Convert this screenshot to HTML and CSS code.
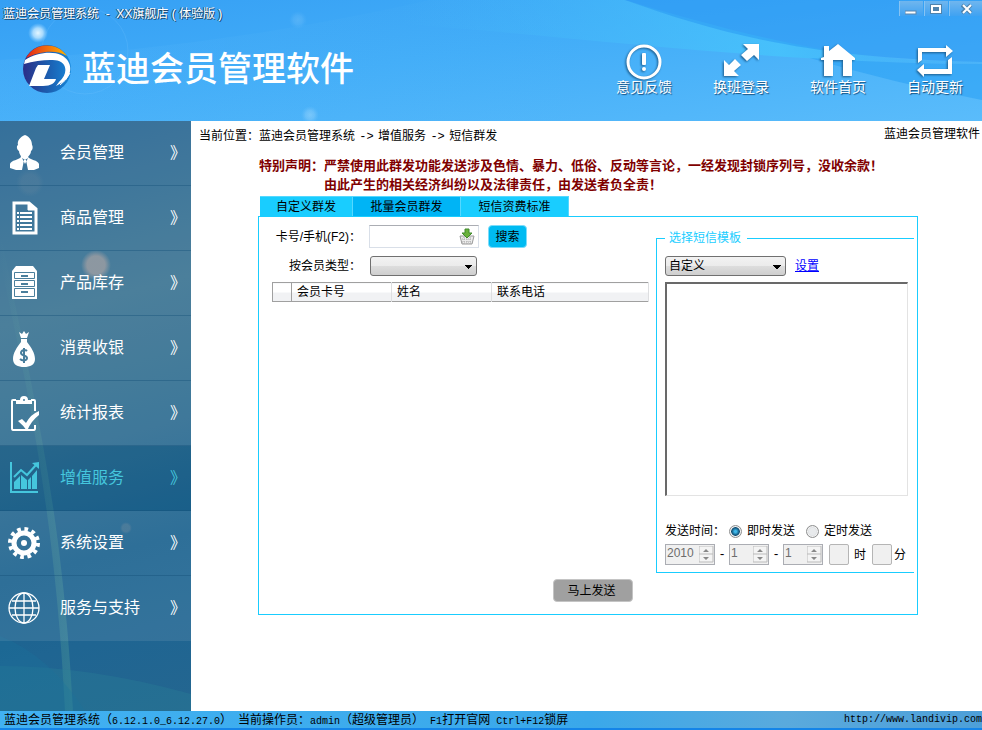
FILE: index.html
```html
<!DOCTYPE html>
<html lang="zh-CN">
<head>
    <meta charset="UTF-8">
    <meta name="viewport" content="width=device-width, initial-scale=1.0">
    <title>蓝迪会员管理系统</title>
    <link rel="stylesheet" href="styles.css">
</head>
<body>
    <header class="header">
        <svg class="header-bg" viewBox="0 0 982 121" preserveAspectRatio="none" aria-hidden="true">
            <defs>
                <linearGradient id="ray" x1="0" y1="0" x2="1" y2="0">
                    <stop offset="0" stop-color="#46b9f8" stop-opacity="0"/>
                    <stop offset="0.65" stop-color="#46c4fc" stop-opacity="0.8"/>
                    <stop offset="1" stop-color="#38acf6" stop-opacity="0.2"/>
                </linearGradient>
                <linearGradient id="band" x1="0" y1="0" x2="1" y2="0">
                    <stop offset="0" stop-color="#7accff" stop-opacity="0.1"/>
                    <stop offset="1" stop-color="#7accff" stop-opacity="0"/>
                </linearGradient>
                <radialGradient id="glow">
                    <stop offset="0" stop-color="#e4f6ff"/>
                    <stop offset="0.5" stop-color="#c4e8ff" stop-opacity="0.8"/>
                    <stop offset="1" stop-color="#8fd0ff" stop-opacity="0"/>
                </radialGradient>
            </defs>
            <path d="M0 60 Q220 48 430 0 H600 V121 H0Z" fill="url(#band)"/>
            <path d="M400 24 C600 38 750 62 982 64 L982 62 C850 62 760 40 625 0 L400 0Z" fill="url(#ray)"/>
            <path d="M625 0 C720 34 810 58 982 62 L982 0Z" fill="#2492f2" fill-opacity="0.45"/>
            <path d="M810 58 Q900 64 982 64 V100 Q890 82 810 58Z" fill="#249df4" fill-opacity="0.5"/>
            <circle cx="38" cy="33" r="10" fill="url(#glow)"/>
            <circle cx="85" cy="51" r="43" fill="none" stroke="#7cc9ff" stroke-opacity="0.2"/>
            <circle cx="298" cy="20" r="9" fill="url(#glow)" fill-opacity="0.15"/>
            <circle cx="310" cy="115" r="9" fill="url(#glow)" fill-opacity="0.3"/>
        </svg>
        <div class="titlebar">
            <span class="title">蓝迪会员管理系统&nbsp; -&nbsp; XX旗舰店 ( 体验版 )</span>
            <div class="window-buttons">
                <button type="button" aria-label="最小化"><svg width="12" height="12"><rect x="0" y="8" width="11" height="3" fill="#fff" stroke="#5a86ad"/></svg></button>
                <button type="button" aria-label="最大化"><svg width="12" height="12"><rect x="0" y="1" width="12" height="10" fill="#4f83ad"/><rect x="2" y="3" width="8" height="6" fill="none" stroke="#fff" stroke-width="2"/></svg></button>
                <button type="button" class="close" aria-label="关闭"><svg width="12" height="12"><path d="M1 2L10 10M10 2L1 10" stroke="#4f83ad" stroke-width="4"/><path d="M2 2L10 10M10 2L2 10" stroke="#fff" stroke-width="2"/></svg></button>
            </div>
        </div>
        <div class="banner">
            <div class="brand">
                <svg width="48" height="48" viewBox="0 0 48 48" aria-hidden="true">
                    <defs>
                        <linearGradient id="blue" x1="0" y1="0" x2="1" y2="0">
                            <stop offset="0" stop-color="#2b2d86"/>
                            <stop offset="0.5" stop-color="#1c5cae"/>
                            <stop offset="1" stop-color="#1686d8"/>
                        </linearGradient>
                        <linearGradient id="orange" x1="0" y1="0" x2="1" y2="0">
                            <stop offset="0" stop-color="#e2231a"/>
                            <stop offset="1" stop-color="#ffb400"/>
                        </linearGradient>
                    </defs>
                    <circle cx="24" cy="24" r="24" fill="url(#blue)"/>
                    <path d="M3 13A24 24 0 0 1 44 11C34 4 16 6 3 13Z" fill="url(#orange)"/>
                    <path d="M2 15C14 7 30 6 38 10C50 16 50 30 40 37L33 41L36 37C45 29 44 19 36 16C30 14 14 15 1 19Z" fill="#fff"/>
                    <path d="M15 20H27L21 34H33C32 38 28 41 20 41H6L13 23Z" fill="#fff"/>
                    <path d="M37 40Q43 36 47 28" stroke="#fff" stroke-width="1" fill="none"/>
                </svg>
                <h1>蓝迪会员管理软件</h1>
            </div>
            <nav class="tools">
                <a href="#">
                    <svg width="38" height="38" viewBox="0 0 38 38"><circle cx="19" cy="19" r="16" fill="none" stroke="#fff" stroke-width="3"/><rect x="17" y="10" width="4" height="12" rx="1" fill="#fff"/><circle cx="19" cy="26" r="2" fill="#fff"/></svg>
                    意见反馈
                </a>
                <a href="#">
                    <svg width="38" height="38" viewBox="0 0 38 38"><path d="M37 1V17L32 12L25 18L19 12L26 6L21 1ZM2 33V17L7 22L13 16L19 22L12 28L17 33Z" fill="#fff"/></svg>
                    换班登录
                </a>
                <a href="#">
                    <svg width="38" height="38" viewBox="0 0 38 38"><path d="M5 14V3H10V8L19 1L36 15V17H33V33H24V17H14V33H5V17H2V15Z" fill="#fff"/></svg>
                    软件首页
                </a>
                <a href="#">
                    <svg width="38" height="38" viewBox="0 0 38 38"><path d="M2 20V5H30V2L37 8L30 14V9H6V17ZM36 14V31H8V34L1 27L8 21V26H32V17Z" fill="#fff"/></svg>
                    自动更新
                </a>
            </nav>
        </div>
    </header>

    <div class="body">
        <nav class="sidebar">
            <svg class="sidebar-bg" viewBox="0 0 191 590" preserveAspectRatio="none" aria-hidden="true">
                <defs>
                    <linearGradient id="curve" x1="0" y1="0" x2="1" y2="0">
                        <stop offset="0" stop-color="#5fae9c" stop-opacity="0"/>
                        <stop offset="1" stop-color="#5fae9c" stop-opacity="0.3"/>
                    </linearGradient>
                    <radialGradient id="spot">
                        <stop offset="0.6" stop-color="#b4a19c" stop-opacity="0.6"/>
                        <stop offset="1" stop-color="#b4a19c" stop-opacity="0"/>
                    </radialGradient>
                </defs>
                <path d="M0 110C30 260 62 380 73 590H65C55 390 26 260 0 140Z" fill="url(#curve)"/>
                <path d="M0 545Q90 545 191 573V590H0Z" fill="#2c8498" fill-opacity="0.3"/>
                <path d="M0 515Q50 535 85 590H0Z" fill="#1a759c" fill-opacity="0.3"/>
                <circle cx="96" cy="144" r="15" fill="url(#spot)"/>
                <circle cx="126" cy="407" r="6" fill="url(#spot)" fill-opacity="0.3"/>
                <circle cx="30" cy="62" r="14" fill="url(#spot)" fill-opacity="0.15"/>
            </svg>
            <a href="#">
                <svg width="34" height="40" viewBox="0 0 34 40"><path d="M17 2C12 4 9 8 10 12C8 13 9 17 11 18C11 21 13 22 13 24C11 27 3 27 2 31V35L8 37H14L16 27H18L20 37H26L31 35V31C30 27 22 27 20 24C21 22 23 21 23 18C25 17 25 13 24 12C24 8 22 4 17 2ZM14 25L17 27L20 25L17 31Z" fill="#fff" fill-rule="evenodd"/></svg>
                <span>会员管理</span><i>》</i>
            </a>
            <a href="#">
                <svg width="34" height="40" viewBox="0 0 34 40" fill="none" stroke="#fff"><path d="M6 5H21L28 11V35H6Z" stroke-width="3"/><path d="M20 4V12H28" fill="#fff"/><path d="M12 15H24M12 19H24M12 23H24M12 27H24M12 31H24M9 15H11M9 19H11M9 23H11M9 27H11M9 31H11" stroke-width="2"/></svg>
                <span>商品管理</span><i>》</i>
            </a>
            <a href="#">
                <svg width="34" height="40" viewBox="0 0 34 40"><path d="M8 3H25L29 8V36H4V8Z" fill="#fff"/><g fill="none" stroke="#4a7f9c"><path d="M6.500 9.500H26.500V15.500H6.500ZM6.500 17.500H26.500V23.500H6.500ZM6.500 25.500H26.500V33.500H6.500Z"/><path d="M13 13H20M13 21H20M13 29H20" stroke-width="2"/></g></svg>
                <span>产品库存</span><i>》</i>
            </a>
            <a href="#">
                <svg width="34" height="40" viewBox="0 0 34 40"><path d="M11 4L14 6L16 3L18 6L21 4L19 10H13ZM13 11H19V14C23 19 27 25 27 31C27 37 22 39 16 39C10 39 5 37 5 31C5 25 9 19 13 14Z" fill="#fff"/><path d="M19 23C17 21 13 22 13 25C13 28 19 27 19 30C19 33 14 33 12 31M16 20V35" fill="none" stroke="#477d9c" stroke-width="2"/></svg>
                <span>消费收银</span><i>》</i>
            </a>
            <a href="#">
                <svg width="34" height="40" viewBox="0 0 34 40" fill="none" stroke="#fff" stroke-width="2"><path d="M8 7H5Q4 7 4 8V35Q4 37 5 37H26Q27 37 27 35V32M23 7H26Q27 7 27 8V18"/><path d="M8 11V7H12A4 4 0 0 1 20 7H24V11Z" fill="#fff" stroke="none"/><circle cx="16" cy="7" r="1" fill="#477d9c" stroke="none"/><path d="M10 28L14 26L18 30Q23 21 31 18V22Q23 28 19 38Q15 32 10 28Z" fill="#fff" stroke="none"/></svg>
                <span>统计报表</span><i>》</i>
            </a>
            <a href="#" class="active">
                <svg width="34" height="40" viewBox="0 0 34 40"><path d="M2 4H4V33H30V35H2ZM6 24L12 18V31H6ZM13 17L19 22V31H13ZM20 22L23 19V31H20ZM24 18L29 12V31H24Z" fill="#45c6dd"/><path d="M6 19L13 12L19 17L28 7" fill="none" stroke="#45c6dd" stroke-width="2"/><path d="M24 5L31 4V11Z" fill="#45c6dd"/></svg>
                <span>增值服务</span><i>》</i>
            </a>
            <a href="#">
                <svg width="34" height="40" viewBox="0 0 34 40"><circle cx="16" cy="20" r="14" fill="none" stroke="#fff" stroke-width="4" stroke-dasharray="3.700 3.630"/><circle cx="16" cy="20" r="10" fill="none" stroke="#fff" stroke-width="5"/><circle cx="16" cy="20" r="3" fill="#fff"/></svg>
                <span>系统设置</span><i>》</i>
            </a>
            <a href="#">
                <svg width="34" height="40" viewBox="0 0 34 40" fill="none" stroke="#fff" stroke-width="1.300"><circle cx="16" cy="20" r="15"/><ellipse cx="16" cy="20" rx="9" ry="15"/><path d="M16 5V35M1 20H31M4 13H28M4 27H28"/></svg>
                <span>服务与支持</span><i>》</i>
            </a>
        </nav>

        <main class="content">
            <div class="location">
                <span>当前位置：蓝迪会员管理系统 <b>-&gt;</b> 增值服务 <b>-&gt;</b> 短信群发</span>
                <span class="product">蓝迪会员管理软件</span>
            </div>

            <div class="workspace">
                <p class="notice">特别声明：严禁使用此群发功能发送涉及色情、暴力、低俗、反动等言论，一经发现封锁序列号，没收余款！</p>
                <p class="notice indent">由此产生的相关经济纠纷以及法律责任，由发送者负全责！</p>

                <div class="tabs">
                    <button type="button">自定义群发</button>
                    <button type="button" class="active">批量会员群发</button>
                    <button type="button">短信资费标准</button>
                </div>

                <form class="panel" onsubmit="return false">
                    <div class="columns">
                        <section class="members">
                            <div class="row">
                                <label for="card">卡号/手机<b>(F2)</b>：</label>
                                <div class="search-box">
                                    <input type="text" id="card">
                                    <svg width="16" height="18" viewBox="0 0 16 18" aria-hidden="true"><path d="M1 8H15L13 16H3Z" fill="#ececec" stroke="#999"/><path d="M3 11H13M3 14H13M5 9V16M8 9V16M11 9V16" stroke="#aaa" stroke-dasharray="1 1"/><path d="M6 1H10V5H13L8 10L3 5H6Z" fill="#6ab13c" stroke="#418a2c"/></svg>
                                </div>
                                <button type="button" class="search">搜索</button>
                            </div>
                            <div class="row">
                                <label for="type">按会员类型：</label>
                                <select id="type" class="type"><option></option></select>
                            </div>
                            <table>
                                <thead>
                                    <tr><th class="mark"></th><th class="col">会员卡号</th><th class="col">姓名</th><th>联系电话</th></tr>
                                </thead>
                            </table>
                        </section>

                        <fieldset class="template">
                            <legend>选择短信模板</legend>
                            <div class="template-row">
                                <select aria-label="短信模板"><option>自定义</option></select>
                                <a href="#">设置</a>
                            </div>
                            <textarea aria-label="短信内容"></textarea>
                            <div class="send-time">
                                <span>发送时间：</span>
                                <label><input type="radio" name="time" checked>即时发送</label>
                                <label><input type="radio" name="time">定时发送</label>
                            </div>
                            <div class="date">
                                <span class="spin year"><input type="text" value="2010" aria-label="年" disabled><svg width="15" height="17"><path d="M0 0H14V16H0ZM0 8H14" fill="#f4f4f4" stroke="#bbb"/><path d="M4 6L7 3L10 6ZM4 11L7 14L10 11Z" fill="#888"/></svg></span>
                                <b>-</b>
                                <span class="spin"><input type="text" value="1" aria-label="月" disabled><svg width="15" height="17"><path d="M0 0H14V16H0ZM0 8H14" fill="#f4f4f4" stroke="#bbb"/><path d="M4 6L7 3L10 6ZM4 11L7 14L10 11Z" fill="#888"/></svg></span>
                                <b>-</b>
                                <span class="spin"><input type="text" value="1" aria-label="日" disabled><svg width="15" height="17"><path d="M0 0H14V16H0ZM0 8H14" fill="#f4f4f4" stroke="#bbb"/><path d="M4 6L7 3L10 6ZM4 11L7 14L10 11Z" fill="#888"/></svg></span>
                                <label class="clock hour"><input type="text" disabled>时</label>
                                <label class="clock"><input type="text" disabled>分</label>
                            </div>
                        </fieldset>
                    </div>
                    <button type="submit" class="send">马上发送</button>
                </form>
            </div>
        </main>
    </div>

    <footer class="statusbar">
        <span>蓝迪会员管理系统（<b>6.12.1.0_6.12.27.0</b>）</span>
        <span>当前操作员：<b>admin</b>（超级管理员）</span>
        <span><b>F1</b>打开官网</span>
        <span><b>Ctrl+F12</b>锁屏</span>
        <a href="#">http://www.landivip.com</a>
    </footer>
</body>
</html>
```

FILE: styles.css
```css
* {
    box-sizing: border-box;
}
body {
    margin: 0;
    min-height: 100vh;
    display: flex;
    flex-direction: column;
    font-family: "Liberation Sans", "Noto Sans CJK SC", sans-serif;
    font-size: 12px;
    line-height: 18px;
    color: #000;
    background-color: #fff;
}
button, input, select, textarea {
    font: inherit;
    color: inherit;
    margin: 0;
}
svg {
    display: block;
    flex: none;
}

/* Шапка */
.header {
    position: relative;
    height: 121px;
    background: linear-gradient(172deg, #359ff4 0%, #42adf8 45%, #5abcfb 100%);
    color: #fff;
}
.header-bg {
    position: absolute;
    width: 100%;
    height: 100%;
}
.titlebar {
    position: relative;
    display: flex;
    justify-content: space-between;
    height: 40px;
}
.title {
    padding: 5px 3px;
    text-shadow: 1px 1px 0 #1c4a70, -1px 0 0 #1c4a70;
}
.window-buttons {
    display: flex;
    align-items: flex-start;
    padding-top: 1px;
    gap: 1px;
}
.window-buttons button {
    width: 24px;
    height: 15px;
    padding: 1px 5px;
    border: none;
    border-left: 1px solid #86c3f3;
    background: linear-gradient(#70b6ee, #3fa2f2);
}
.window-buttons .close {
    width: 33px;
    padding: 1px 11px;
}
.banner {
    position: relative;
    display: flex;
    justify-content: space-between;
    padding: 0 0 0 23px;
}
.brand {
    display: flex;
    align-items: center;
    gap: 11px;
    height: 58px;
}
.brand h1 {
    margin: 0;
    font-size: 34px;
    font-weight: 500;
    line-height: 40px;
}
.tools {
    display: flex;
    padding-top: 3px;
}
.tools a {
    display: flex;
    flex-direction: column;
    align-items: center;
    width: 97px;
    padding-left: 3px;
    color: #fff;
    font-size: 14px;
    line-height: 12px;
    text-decoration: none;
    text-shadow: 1px 1px 1px #17507f;
}
.tools svg {
    filter: drop-shadow(-1px 1px 1px #1d5c8c);
}

/* Меню */
.body {
    flex: 1;
    display: flex;
}
.sidebar {
    position: relative;
    width: 191px;
    flex: none;
    background: linear-gradient(165deg, #226292 0, #3a7392 32%, #2c6b90 54%, #1a618e 72%, #1f6592 85%, #246690 100%);
}
.sidebar-bg {
    position: absolute;
    width: 100%;
    height: 100%;
}
.sidebar a {
    position: relative;
    display: flex;
    align-items: center;
    height: 65px;
    padding-left: 8px;
    border-bottom: 1px solid rgba(20, 80, 120, 0.4);
    background-color: rgba(255, 255, 255, 0.09);
    color: #fff;
    font-size: 16px;
    text-decoration: none;
}
.sidebar a.active {
    background-color: rgba(10, 80, 120, 0.2);
    color: #45c6dd;
}
.sidebar a:last-child {
    border-bottom-color: transparent;
}
.sidebar span {
    flex: 1;
    padding-left: 18px;
}
.sidebar i {
    width: 21px;
    font-style: normal;
}

/* Рабочая область */
.content {
    flex: 1;
    min-width: 0;
}
.content b, .statusbar b, .statusbar a {
    font-family: "Liberation Mono", monospace;
    font-size: 10px;
    font-weight: normal;
}
.location {
    display: flex;
    justify-content: space-between;
    padding: 6px 2px 0 8px;
}
.location b {
    margin: 0 1px;
    font-size: 12px;
}
.location .product {
    line-height: 14px;
}
.workspace {
    padding: 10px 64px 0 67px;
}
.notice {
    margin: 0 0 0 1px;
    color: #800000;
    font-size: 13px;
    font-weight: bold;
    line-height: 19px;
    white-space: nowrap;
}
.notice.indent {
    padding-left: 65px;
}
.tabs {
    display: flex;
    padding: 2px 0 0 2px;
}
.tabs button {
    width: 108px;
    height: 20px;
    padding: 0;
    border: 1px solid #55d8ff;
    border-width: 1px 1px 0 0;
    background-color: #19cdff;
    line-height: 18px;
}
.tabs button:first-child {
    width: 93px;
}
.tabs button.active {
    background-color: #00b4f5;
}
.panel {
    padding: 8px 3px 12px 13px;
    border: 1px solid #19cdff;
}
.columns {
    display: flex;
    gap: 7px;
}
.members {
    flex: 1;
    min-width: 0;
}
.row {
    display: flex;
    align-items: center;
    margin-bottom: 8px;
}
.row label {
    width: 97px;
    padding-right: 8px;
    text-align: right;
    white-space: nowrap;
}
.row label b {
    font-family: inherit;
    font-size: 12px;
}
.search-box {
    display: flex;
    align-items: center;
    width: 110px;
    height: 23px;
    margin-right: 9px;
    padding-right: 3px;
    border: 1px solid #d9dfe8;
    border-top-color: #abadb3;
}
.search-box input {
    flex: 1;
    min-width: 0;
    border: none;
    outline: none;
}
.search {
    width: 39px;
    height: 23px;
    padding: 0;
    border: 1px solid #7ddcfa;
    border-radius: 4px;
    background-color: #00bbf2;
}
select {
    appearance: none;
    width: 121px;
    height: 20px;
    padding: 0 3px;
    border: 1px solid #707070;
    border-radius: 3px;
    background:
        conic-gradient(from 315deg at 50% 4px, #000 90deg, transparent 0) right 4px top 8px / 8px 4px no-repeat,
        linear-gradient(#f2f2f2, #ebebeb 50%, #dddddd 50%, #cfcfcf);
    line-height: 18px;
}
select.type {
    width: 107px;
    margin-left: 1px;
}
table {
    width: 100%;
    margin-top: -2px;
    border-collapse: collapse;
    table-layout: fixed;
    border: 1px solid #a0a0a0;
    border-right-color: #e0e0e0;
}
th {
    height: 19px;
    padding: 0 5px;
    border-right: 1px solid #dedfe1;
    background: linear-gradient(#fff 50%, #f1f2f4 50%);
    font-weight: normal;
    line-height: 18px;
    text-align: left;
}
th.mark {
    width: 19px;
    border-right-color: #a0a0a0;
}
th.col {
    width: 100px;
}
.template {
    width: 258px;
    margin: 4px 0 0;
    padding: 0 6px 7px 8px;
    border: 1px solid #19cdff;
    border-right: none;
}
.template legend {
    padding: 0 6px 0 4px;
    color: #19cdff;
}
.template-row {
    display: flex;
    align-items: center;
    gap: 9px;
    padding-top: 9px;
}
.template-row a {
    color: #0000ff;
}
textarea {
    display: block;
    width: 100%;
    height: 214px;
    margin-top: 6px;
    border: 1px solid #e3e3e3;
    border-top: 2px solid #696969;
    border-left: 2px solid #696969;
    resize: none;
}
.send-time {
    display: flex;
    margin-top: 26px;
}
.send-time label {
    display: flex;
    align-items: center;
    margin-right: 11px;
}
.send-time input {
    appearance: none;
    width: 13px;
    height: 13px;
    margin: 0 5px 0 4px;
    border: 1px solid #8e8f8f;
    border-radius: 50%;
    background: radial-gradient(#e8eaec 40%, #bfc3c7);
    box-shadow: inset 0 0 0 1px #f4f4f4;
}
.send-time label + label input {
    margin-left: 0;
}
.send-time input:checked {
    background: radial-gradient(circle, #3fb8ea 1px, #0d4a70 4px, #d5dde2 5px);
}
.date {
    display: flex;
    align-items: center;
    margin-top: 4px;
}
.date b {
    width: 14px;
    font-size: 12px;
    text-align: center;
}
.spin {
    display: flex;
    align-items: center;
    width: 40px;
    height: 21px;
    border: 1px solid #abadb3;
    background-color: #f0f0f0;
}
.spin.year {
    width: 50px;
}
.spin input {
    flex: 1;
    min-width: 0;
    padding: 0 0 4px 1px;
    border: none;
    background: none;
    color: #6d6d6d;
    line-height: 16px;
}
.clock {
    display: flex;
    align-items: center;
    gap: 2px;
    margin-left: 6px;
}
.clock.hour {
    gap: 5px;
}
.clock input {
    width: 20px;
    height: 21px;
    border: 1px solid #b5b5b5;
    border-radius: 2px;
    background-color: #f0f0f0;
}
.send {
    display: block;
    width: 80px;
    height: 23px;
    margin: 6px auto 0;
    padding: 0 3px 0 0;
    border: 1px solid #c4c4c4;
    border-radius: 4px;
    background-color: #a0a0a0;
    line-height: 18px;
}

/* Строка состояния */
.statusbar {
    display: flex;
    gap: 6px;
    height: 19px;
    padding-left: 4px;
    border-bottom: 2px solid #1484e8;
    background: linear-gradient(90deg, #41b1f2, #3aa8ea 60%, #5aaadd 80%, #4d9fd8);
    white-space: nowrap;
}
.statusbar a {
    margin-left: auto;
    color: #000;
    text-decoration: none;
}
```
